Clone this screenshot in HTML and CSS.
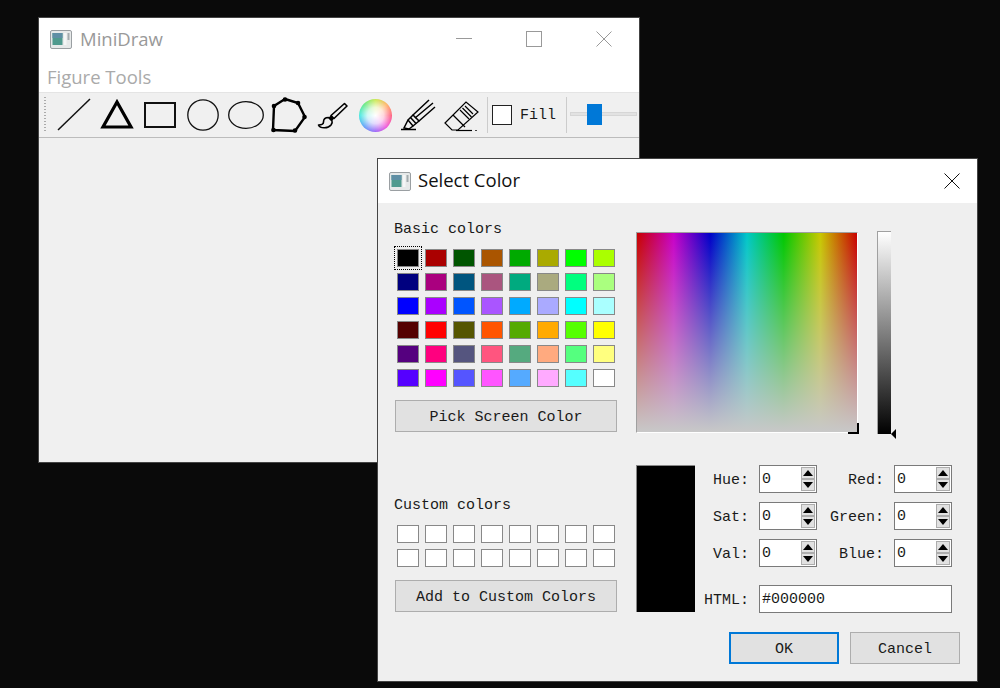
FILE: index.html
```html
<!DOCTYPE html>
<html lang="en">
<head>
    <meta charset="UTF-8">
    <meta name="viewport" content="width=device-width, initial-scale=1.0">
    <title>MiniDraw</title>
    <link rel="stylesheet" href="styles.css">
</head>
<body>

    <!-- main window -->
    <div class="window main-window">
        <div class="titlebar">
            <svg class="app-icon" viewBox="0 0 22 19"><rect x="0.5" y="0.5" width="21" height="18" rx="1.5" fill="#e6e9e9" stroke="#9a9fa2"/><rect x="2.5" y="3" width="10" height="12" fill="#4f9a8e"/><rect x="2.5" y="3" width="10" height="5" fill="#5f8fa5"/><rect x="14" y="3" width="2.5" height="12" fill="#f4f6f6"/><rect x="17.5" y="3" width="2" height="7" fill="#a3abae"/></svg>
            <span class="main-title">MiniDraw</span>
            <div class="controls">
                <div class="control"><svg width="16" height="16" viewBox="0 0 16 16"><path d="M0 7.5H16" stroke="#999"/></svg></div>
                <div class="control"><svg width="16" height="16" viewBox="0 0 16 16"><rect x="0.5" y="0.5" width="15" height="15" fill="none" stroke="#999"/></svg></div>
                <div class="control"><svg width="16" height="16" viewBox="0 0 16 16"><path d="M0.5 0.5L15.5 15.5M15.5 0.5L0.5 15.5" stroke="#999"/></svg></div>
            </div>
        </div>
        <div class="menubar">Figure Tools</div>
        <div class="toolbar">
            <div class="grip"></div>
            <div class="tool"><svg viewBox="0 0 36 36"><path d="M2 33L34 2" stroke="#111" stroke-width="1.5" fill="none"/></svg></div>
            <div class="tool"><svg viewBox="0 0 36 36"><path d="M18 5L4 30H32Z" stroke="#000" stroke-width="3.2" fill="none"/></svg></div>
            <div class="tool"><svg viewBox="0 0 36 36"><rect x="3" y="6" width="30" height="24" stroke="#111" stroke-width="2" fill="none"/></svg></div>
            <div class="tool"><svg viewBox="0 0 36 36"><circle cx="18" cy="18" r="15.2" stroke="#111" stroke-width="1.3" fill="none"/></svg></div>
            <div class="tool"><svg viewBox="0 0 36 36"><ellipse cx="18" cy="18" rx="17.3" ry="13.3" stroke="#111" stroke-width="1.3" fill="none"/></svg></div>
            <div class="tool"><svg viewBox="0 0 36 36"><path d="M14 2L27 6L34 20L24 34L2 33L3 9Z" stroke="#000" stroke-width="2.4" fill="none"/><g fill="#000"><circle cx="14" cy="2.5" r="2.3"/><circle cx="27" cy="6" r="2.3"/><circle cx="33.5" cy="20" r="2.3"/><circle cx="24" cy="33.5" r="2.3"/><circle cx="2.5" cy="33" r="2.3"/><circle cx="3" cy="9" r="2.3"/></g></svg></div>
            <div class="tool"><svg viewBox="0 0 36 36"><path d="M30.5 6.5L33 9L20 21.5L17 18.5Z" stroke="#000" stroke-width="1.6" fill="none" stroke-linejoin="round"/><path d="M17 18.5L14.5 20.5L18 24L20 21.5Z" fill="#000"/><path d="M14.5 20.5C11 20.5 9.5 22.5 9.5 25C9.5 27 7 28 4.5 28C6 31.5 14 32 17 28C18 26.5 18.5 25 18 24Z" stroke="#000" stroke-width="1.6" fill="#f0f0f0" stroke-linejoin="round"/></svg></div>
            <div class="tool"><div class="wheel"></div></div>
            <div class="tool"><svg viewBox="0 0 36 36"><g stroke="#000" stroke-width="1.5" fill="none"><path d="M13 18L29 3M15 21L33 6M19 24L35 10"/><path d="M13 18L8 23L13 29L19 24Z"/><path d="M10.500 20.500L16 26.500"/><path d="M8 23L4 31L9 32L13 29"/><path d="M1 32.500H16"/></g></svg></div>
            <div class="tool"><svg viewBox="0 0 36 36"><g stroke="#000" stroke-width="1.2" fill="none"><path d="M2 26L23 5L35 15L15 33H9Z"/><path d="M10 18L22 30"/><path d="M17 13L26 22M19.500 11L28.500 20M22 9L30 17"/><path d="M13 33.500H29"/></g><path d="M32 33.500H34" stroke="#444" stroke-width="1.2"/></svg></div>
            <div class="sep"></div>
            <div class="fill-box"></div>
            <span class="fill-label">Fill</span>
            <div class="sep sep-second"></div>
            <div class="slider"><div class="slider-handle"></div></div>
        </div>
        <div class="canvas"></div>
    </div>

    <!-- color dialog -->
    <div class="window dialog">
        <div class="titlebar dialog-titlebar">
            <svg class="app-icon" viewBox="0 0 22 19"><rect x="0.5" y="0.5" width="21" height="18" rx="1.5" fill="#e6e9e9" stroke="#9a9fa2"/><rect x="2.5" y="3" width="10" height="12" fill="#4f9a8e"/><rect x="2.5" y="3" width="10" height="5" fill="#5f8fa5"/><rect x="14" y="3" width="2.5" height="12" fill="#f4f6f6"/><rect x="17.5" y="3" width="2" height="7" fill="#a3abae"/></svg>
            <span class="dialog-title">Select Color</span>
            <svg class="dialog-close" width="16" height="16" viewBox="0 0 16 16"><path d="M0.5 0.5L15.5 15.5M15.5 0.5L0.5 15.5" stroke="#111"/></svg>
        </div>
        <div class="dialog-body">
            <div class="left-col">
                <div class="label">Basic colors</div>
                <div class="swatches basic">
                    <div class="swatch focused" style="background:#000000"></div>
                    <div class="swatch" style="background:#aa0000"></div>
                    <div class="swatch" style="background:#005500"></div>
                    <div class="swatch" style="background:#aa5500"></div>
                    <div class="swatch" style="background:#00aa00"></div>
                    <div class="swatch" style="background:#aaaa00"></div>
                    <div class="swatch" style="background:#00ff00"></div>
                    <div class="swatch" style="background:#aaff00"></div>
                    <div class="swatch" style="background:#00007f"></div>
                    <div class="swatch" style="background:#aa007f"></div>
                    <div class="swatch" style="background:#00557f"></div>
                    <div class="swatch" style="background:#aa557f"></div>
                    <div class="swatch" style="background:#00aa7f"></div>
                    <div class="swatch" style="background:#aaaa7f"></div>
                    <div class="swatch" style="background:#00ff7f"></div>
                    <div class="swatch" style="background:#aaff7f"></div>
                    <div class="swatch" style="background:#0000ff"></div>
                    <div class="swatch" style="background:#aa00ff"></div>
                    <div class="swatch" style="background:#0055ff"></div>
                    <div class="swatch" style="background:#aa55ff"></div>
                    <div class="swatch" style="background:#00aaff"></div>
                    <div class="swatch" style="background:#aaaaff"></div>
                    <div class="swatch" style="background:#00ffff"></div>
                    <div class="swatch" style="background:#aaffff"></div>
                    <div class="swatch" style="background:#550000"></div>
                    <div class="swatch" style="background:#ff0000"></div>
                    <div class="swatch" style="background:#555500"></div>
                    <div class="swatch" style="background:#ff5500"></div>
                    <div class="swatch" style="background:#55aa00"></div>
                    <div class="swatch" style="background:#ffaa00"></div>
                    <div class="swatch" style="background:#55ff00"></div>
                    <div class="swatch" style="background:#ffff00"></div>
                    <div class="swatch" style="background:#55007f"></div>
                    <div class="swatch" style="background:#ff007f"></div>
                    <div class="swatch" style="background:#55557f"></div>
                    <div class="swatch" style="background:#ff557f"></div>
                    <div class="swatch" style="background:#55aa7f"></div>
                    <div class="swatch" style="background:#ffaa7f"></div>
                    <div class="swatch" style="background:#55ff7f"></div>
                    <div class="swatch" style="background:#ffff7f"></div>
                    <div class="swatch" style="background:#5500ff"></div>
                    <div class="swatch" style="background:#ff00ff"></div>
                    <div class="swatch" style="background:#5555ff"></div>
                    <div class="swatch" style="background:#ff55ff"></div>
                    <div class="swatch" style="background:#55aaff"></div>
                    <div class="swatch" style="background:#ffaaff"></div>
                    <div class="swatch" style="background:#55ffff"></div>
                    <div class="swatch" style="background:#ffffff"></div>
                </div>
                <button class="btn wide pick-btn">Pick Screen Color</button>
                <div class="label custom-label">Custom colors</div>
                <div class="swatches custom">
                    <div class="swatch"></div><div class="swatch"></div><div class="swatch"></div><div class="swatch"></div>
                    <div class="swatch"></div><div class="swatch"></div><div class="swatch"></div><div class="swatch"></div>
                    <div class="swatch"></div><div class="swatch"></div><div class="swatch"></div><div class="swatch"></div>
                    <div class="swatch"></div><div class="swatch"></div><div class="swatch"></div><div class="swatch"></div>
                </div>
                <button class="btn wide pick-btn">Add to Custom Colors</button>
            </div>
            <div class="right-col">
                <div class="picker-row">
                    <div class="picker"><div class="crosshair"></div></div>
                    <div class="lum"><div class="lum-arrow"></div></div>
                </div>
                <div class="values-row">
                    <div class="preview"></div>
                    <div class="fields">
                        <span class="field-label">Hue:</span>
                        <div class="spin"><span class="spin-value">0</span><div class="spin-btns"><div class="spin-up"></div><div class="spin-down"></div></div></div>
                        <span class="field-label">Red:</span>
                        <div class="spin"><span class="spin-value">0</span><div class="spin-btns"><div class="spin-up"></div><div class="spin-down"></div></div></div>
                        <span class="field-label">Sat:</span>
                        <div class="spin"><span class="spin-value">0</span><div class="spin-btns"><div class="spin-up"></div><div class="spin-down"></div></div></div>
                        <span class="field-label">Green:</span>
                        <div class="spin"><span class="spin-value">0</span><div class="spin-btns"><div class="spin-up"></div><div class="spin-down"></div></div></div>
                        <span class="field-label">Val:</span>
                        <div class="spin"><span class="spin-value">0</span><div class="spin-btns"><div class="spin-up"></div><div class="spin-down"></div></div></div>
                        <span class="field-label">Blue:</span>
                        <div class="spin"><span class="spin-value">0</span><div class="spin-btns"><div class="spin-up"></div><div class="spin-down"></div></div></div>
                        <span class="field-label html-row">HTML:</span>
                        <div class="html-input html-row">#000000</div>
                    </div>
                </div>
                <div class="dialog-buttons">
                    <button class="btn ok-btn">OK</button>
                    <button class="btn">Cancel</button>
                </div>
            </div>
        </div>
    </div>

</body>
</html>
```

FILE: styles.css
```css
body {
    margin: 0;
    height: 688px;
    overflow: hidden;
    background-color: #0a0a0a;
    font-family: "Liberation Mono", "Noto Sans CJK SC", monospace;
    font-size: 15px;
    color: #1a1a1a;
}

/* windows on the desktop */
.window {
    position: absolute;
    box-sizing: border-box;
    display: flex;
    flex-direction: column;
    box-shadow: 0 0 0 1px #444;
    overflow: hidden;
}
.main-window {
    left: 39px;
    top: 18px;
    width: 600px;
    height: 444px;
    background-color: white;
}
.dialog {
    left: 378px;
    top: 159px;
    width: 599px;
    height: 522px;
    background-color: #efefef;
}

.titlebar {
    display: flex;
    align-items: center;
    height: 42px;
    flex-shrink: 0;
    background-color: white;
    padding-left: 11px;
}
.app-icon {
    width: 22px;
    height: 19px;
}
.main-title {
    margin-left: 8px;
    margin-top: -2px;
    font-family: "Open Sans", sans-serif;
    font-size: 18.5px;
    color: #999;
}
.controls {
    display: flex;
    margin-left: auto;
}
.control {
    width: 70px;
    display: flex;
    justify-content: center;
    align-items: center;
}

.menubar {
    height: 32px;
    line-height: 33px;
    padding-left: 8px;
    background-color: white;
    font-family: "Open Sans", sans-serif;
    font-size: 18.5px;
    color: #aaa;
}

/* toolbar */
.toolbar {
    display: flex;
    align-items: center;
    height: 46px;
    flex-shrink: 0;
    box-sizing: border-box;
    background-color: #f0f0f0;
    border-top: 1px solid #e4e4e4;
    border-bottom: 1px solid #bcbcbc;
}
.grip {
    width: 2px;
    height: 36px;
    margin-left: 5px;
    margin-right: 6px;
    background-image: linear-gradient(#aaa 50%, transparent 50%);
    background-size: 2px 3px;
}
.tool {
    width: 43px;
    height: 36px;
    flex-shrink: 0;
    display: flex;
    justify-content: center;
    align-items: center;
}
.tool svg {
    width: 36px;
    height: 36px;
}
.wheel {
    width: 33px;
    height: 33px;
    margin-left: 1px;
    border-radius: 50%;
    background:
        radial-gradient(circle, #fff 0%, rgba(255, 255, 255, 0.75) 35%, rgba(255, 255, 255, 0) 72%),
        conic-gradient(#c8e84a, #ffb060, #ff5a7a, #f050d8, #9a60f8, #5a9cf8, #40e8e0, #60e880, #c8e84a);
}
.sep {
    width: 1px;
    height: 36px;
    margin-left: 5px;
    background-color: #ccc;
    flex-shrink: 0;
}
.fill-box {
    width: 20px;
    height: 20px;
    box-sizing: border-box;
    margin-left: 4px;
    border: 1px solid #222;
    background-color: white;
    flex-shrink: 0;
}
.fill-label {
    margin-left: 8px;
    width: 36px;
    padding-top: 1px;
    flex-shrink: 0;
}
.sep-second {
    margin-left: 10px;
}
.slider {
    position: relative;
    width: 67px;
    height: 4px;
    margin-left: 3px;
    margin-bottom: 2px;
    flex-shrink: 0;
    background-color: #e2e2e2;
    border: 1px solid #d6d6d6;
    box-sizing: border-box;
}
.slider-handle {
    position: absolute;
    left: 16px;
    top: -9px;
    width: 15px;
    height: 21px;
    background-color: #0078d7;
}
.canvas {
    flex-grow: 1;
    background-color: #f0f0f0;
}

/* dialog */
.dialog-titlebar {
    height: 44px;
}
.dialog-title {
    margin-left: 7px;
    margin-top: -4px;
    font-family: "Open Sans", sans-serif;
    font-size: 18.5px;
    color: #111;
}
.dialog-close {
    margin-left: auto;
    margin-right: 17px;
}
.dialog-body {
    display: flex;
    padding: 15px 17px 0 16px;
}
.left-col {
    width: 223px;
    flex-shrink: 0;
}
.label {
    height: 20px;
    line-height: 24px;
}
.swatches {
    display: grid;
    grid-template-columns: repeat(8, 22px);
    grid-auto-rows: 18px;
    gap: 6px;
    margin-top: 11px;
    margin-left: 3px;
}
.swatch {
    box-sizing: border-box;
    border: 1px solid #888;
    background-color: white;
}
.swatch.focused {
    outline: 1px dotted #000;
    outline-offset: 2px;
}
.btn {
    display: block;
    box-sizing: border-box;
    width: 110px;
    height: 32px;
    padding: 2px 0 0;
    font-family: inherit;
    font-size: 15px;
    color: #1a1a1a;
    background-color: #e1e1e1;
    border: 1px solid #adadad;
}
.wide {
    width: 222px;
    margin-left: 1px;
}
.pick-btn {
    margin-top: 13px;
}
.custom-label {
    margin-top: 62px;
}
.right-col {
    width: 324px;
    margin-left: 19px;
    margin-top: 13px;
}
.picker-row {
    display: flex;
    align-items: flex-start;
}
.picker {
    position: relative;
    width: 222px;
    height: 201px;
    margin-top: 1px;
    box-sizing: border-box;
    border-top: 1px solid #a0a0a0;
    border-left: 1px solid #a0a0a0;
    border-right: 1px solid #fff;
    border-bottom: 1px solid #fff;
    background:
        linear-gradient(rgba(200, 200, 200, 0), #c8c8c8),
        linear-gradient(to right, #c80000, #c800c8 16.67%, #0000c8 33.33%, #00c8c8 50%, #00c800 66.67%, #c8c800 83.33%, #c80000);
}
.crosshair {
    position: absolute;
    right: -2px;
    bottom: -2px;
    width: 9px;
    height: 9px;
    border-right: 2px solid #000;
    border-bottom: 2px solid #000;
}
.lum {
    position: relative;
    width: 14px;
    height: 203px;
    margin-left: 19px;
    box-sizing: border-box;
    border-top: 1px solid #a0a0a0;
    border-left: 1px solid #a0a0a0;
    background: linear-gradient(#fff, #000);
}
.lum-arrow {
    position: absolute;
    left: 13px;
    bottom: -5px;
    border-top: 5px solid transparent;
    border-bottom: 5px solid transparent;
    border-right: 5px solid #000;
}
.values-row {
    display: flex;
    margin-top: 31px;
}
.preview {
    width: 59px;
    height: 147px;
    box-sizing: border-box;
    border-top: 1px solid #888;
    border-left: 1px solid #888;
    background-color: #000;
}
.fields {
    display: grid;
    grid-template-columns: 64px 58px 77px 58px;
    grid-auto-rows: 28px;
    row-gap: 9px;
    align-items: center;
}
.field-label {
    text-align: right;
    padding-right: 10px;
    padding-top: 2px;
}
.spin {
    display: flex;
    height: 28px;
    box-sizing: border-box;
    border: 1px solid #7a7a7a;
    background-color: white;
}
.spin-value {
    flex-grow: 1;
    line-height: 28px;
    padding-left: 2px;
}
.spin-btns {
    width: 14px;
    margin: 1px;
    display: flex;
    flex-direction: column;
}
.spin-up, .spin-down {
    flex: 1;
    position: relative;
    background-color: #e1e1e1;
    border: 1px solid #adadad;
    box-sizing: border-box;
}
.spin-up::before, .spin-down::before {
    content: "";
    position: absolute;
    left: 1px;
    top: 2px;
    border-left: 5px solid transparent;
    border-right: 5px solid transparent;
}
.spin-up::before {
    border-bottom: 6px solid #000;
}
.spin-down::before {
    border-top: 6px solid #000;
}
.html-row {
    margin-top: 18px;
}
.html-input {
    grid-column: 2 / -1;
    height: 28px;
    line-height: 28px;
    box-sizing: border-box;
    padding-left: 2px;
    border: 1px solid #7a7a7a;
    background-color: white;
}
.dialog-buttons {
    display: flex;
    justify-content: flex-end;
    gap: 11px;
    margin-top: 20px;
}
.ok-btn {
    border: 2px solid #0078d7;
}
```
